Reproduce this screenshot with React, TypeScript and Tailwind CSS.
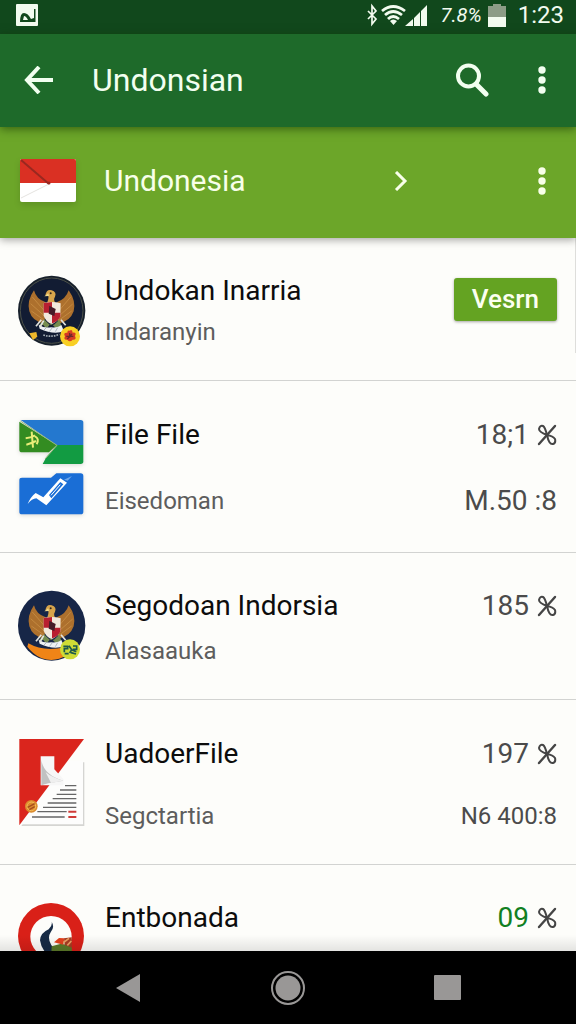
import type { ReactNode } from 'react';

type Row = {
  title: string;
  subtitle?: string;
  value?: string;
  detail?: string;
  action?: string;
  highlight?: boolean;
  icon: ReactNode;
  gap: string;
  pad: string;
  detailSize?: string;
};

const Emblem = ({ plain = false }: { plain?: boolean }) => (
  <svg viewBox="54 42 204 216" className="w-[68px] h-[72px]" aria-hidden="true">
    <ellipse cx="155" cy="149" rx="101" ry="105" fill={plain ? '#172647' : '#17202b'} />
    {!plain && <ellipse cx="155" cy="149" rx="94" ry="98" fill="#121c33" stroke="#4b5049" strokeWidth="3" />}
    {plain && <path d="M85 202Q130 228 194 214L200 238Q165 260 125 247Q98 234 82 212Z" fill="#ef8417" />}
    <path d="M137 124Q108 114 102 88Q80 119 88 151Q97 181 132 188L139 145Z" fill="#ad702d" />
    <path d="M170 124Q198 114 206 88Q229 120 221 151Q211 181 175 188L169 145Z" fill="#ad702d" />
    <path d="M97 108L132 148M92 128L132 164M94 150L132 177M212 108L178 148M218 129L178 164M215 150L178 177" stroke="#c48940" strokeWidth="3" />
    <path d="M136 103Q140 83 155 88Q171 93 165 107Q158 117 169 130H139Q147 114 145 105Z" fill="#d7a44b" />
    <path d="M145 97L133 106L147 105Z" fill="#f1dc8d" />
    <circle cx="152" cy="97" r="3" fill="#33281d" />
    <path d="M131 126Q156 119 182 127L181 166Q173 182 155 190Q136 180 131 164Z" fill="#f2e8dc" />
    <path d="M131 126L156 123V155H131ZM156 155H181V167Q172 182 156 187Z" fill="#b81f30" />
    <path d="M148 134L167 144L163 165L146 158Z" fill="#461b28" />
    <path d="M132 175L117 193L130 192L139 203L153 187L170 204L184 194L178 176L162 191H149Z" fill="#758c4f" />
    <path d="M116 191Q131 202 153 199Q175 201 184 192L192 211Q160 222 119 203Z" fill="#eef1f3" />
    <path d="M132 207L142 197M148 212L157 200M166 212L173 200" stroke="#8b98a6" strokeWidth="2" />
    <path d="M124 176L108 196M131 179L120 198M183 176L197 193" stroke="#e3e4df" strokeWidth="5" />
    {!plain && (
      <>
        <path d="M130 222Q154 230 178 220" stroke="#a7b0b7" strokeWidth="5" strokeDasharray="5 3" fill="none" />
        <path d="M88 217L109 213L112 227L99 237Z" fill="#efb72b" />
      </>
    )}
    <circle cx="210" cy={plain ? 220 : 226} r="30" fill={plain ? '#cfdc36' : '#f8cf24'} />
    {plain ? (
      <path d="M190 211H203V218H193V229M207 209L215 221L209 231M219 210H230V220H218M194 233H206M213 230L228 234M216 222L229 227" stroke="#1d594d" strokeWidth="5" fill="none" />
    ) : (
      <>
        <path d="M209 209Q217 203 218 215Q231 213 225 225Q231 237 218 236Q209 246 202 236Q189 238 195 226Q188 214 202 215Q202 207 209 209Z" fill="#d63a24" />
        <path d="M209 216V230M199 226H220M202 234L216 219" stroke="#6d2828" strokeWidth="4" />
      </>
    )}
  </svg>
);

const FolderPair = () => (
  <svg viewBox="54 54 204 294" className="w-[68px] h-[98px] drop-shadow-sm" aria-hidden="true">
    <path d="M62 57H242Q250 57 250 65V132H168Z" fill="#2478cf" />
    <path d="M170 132H250V181Q250 189 242 189H128L138 170Z" fill="#129b42" />
    <path d="M58 62L170 132L147 154H66Q58 154 58 146Z" fill="#338c21" />
    <path d="M61 60L171 133L135 174" stroke="#96b879" strokeWidth="3" fill="none" />
    <path d="M95 92L99 140M77 112Q91 111 105 103M105 106Q119 113 110 130M79 131Q91 128 108 120" stroke="#e9ed78" strokeWidth="6" fill="none" />
    <path d="M58 237Q58 230 66 230H153L169 217H242Q250 217 250 225V332Q250 340 242 340H66Q58 340 58 332Z" fill="#1a6ed6" />
    <path d="M83 309Q92 287 107 276L130 289L181 232L201 245L139 313L109 292Q96 293 83 309Z" fill="#fff" />
    <path d="M147 282L181 243L190 250L154 292Z" fill="#1a6ed6" />
    <path d="M153 283L181 251" stroke="#fff" strokeWidth="3" />
    <path d="M192 236L216 225L203 239Z" fill="#6ea7eb" />
  </svg>
);

const DocumentIcon = () => (
  <svg viewBox="54 42 204 270" className="w-[68px] h-[90px]" aria-hidden="true">
    <path d="M190 115H253V306H64Z" fill="#d5d5d2" />
    <path d="M171 112H249V301H59Z" fill="#fdfdfc" />
    <path d="M58 45H252L58 304Z" fill="#da251d" />
    <path d="M122 97H163V136L190 165V184H122Z" fill="#f7f7f7" />
    <path d="M124 108Q131 153 190 170L145 178L124 184Z" fill="#c1c1c1" />
    <path d="M137 145Q157 161 190 170L153 177Z" fill="#efefef" />
    <path d="M195 185H229M180 198H229M170 211H229M158 224H229M143 237H229M129 250H229M112 263H200M96 279H194" stroke="#666" strokeWidth="4" />
    <path d="M205 263H229M205 279H229" stroke="#cf3b37" strokeWidth="6" />
    <circle cx="94" cy="247" r="19" fill="#dc8b2d" />
    <circle cx="94" cy="247" r="13" fill="none" stroke="#f4bb58" strokeWidth="3" />
    <path d="M83 250L104 239M88 257L104 248" stroke="#a64c1d" strokeWidth="4" />
  </svg>
);

const RingIcon = () => (
  <svg viewBox="54 36 204 204" className="w-[68px] h-[68px]" aria-hidden="true">
    <circle cx="153" cy="138" r="99" fill="#d92018" />
    <circle cx="153" cy="140" r="62" fill="#fdfdfa" />
    <path d="M155 95Q165 112 152 127Q141 143 154 166L174 183L160 210Q124 183 120 151Q121 129 146 118Q158 108 155 95Z" fill="#172b45" />
    <path d="M155 169L183 161L215 167L216 192H154Z" fill="#5c7a29" />
    <path d="M162 157L177 144L193 145L190 164Z" fill="#e4411d" />
    <path d="M192 145L215 142L216 173L194 165Z" fill="#a83c23" />
    <path d="M190 158L207 145M202 166L214 153" stroke="#eba263" strokeWidth="5" />
  </svg>
);

const CrossIcon = () => (
  <svg viewBox="0 0 20 24" className="w-5 h-6" fill="none" stroke="#454545" strokeWidth="2" strokeLinecap="round" strokeLinejoin="round" aria-hidden="true">
    <path d="M2 21L18 3" strokeWidth="2.4" />
    <path d="M10 12Q2 9 2 6Q3 2 6 3Q8 4 10 12Q16 13 18 16Q19 20 16 21Q12 22 10 12" />
  </svg>
);

const DotsIcon = () => (
  <svg viewBox="0 0 8 28" className="w-2 h-7" fill="currentColor" aria-hidden="true">
    <circle cx="4" cy="4" r="3.7" />
    <circle cx="4" cy="14" r="3.7" />
    <circle cx="4" cy="24" r="3.7" />
  </svg>
);

const rows: Row[] = [
  { title: 'Undokan Inarria', subtitle: 'Indaranyin', action: 'Vesrn', icon: <Emblem />, gap: 'gap-[5px]', pad: 'pt-[33px] pb-8' },
  { title: 'File File', subtitle: 'Eisedoman', value: '18;1', detail: 'M.50 :8', icon: <FolderPair />, gap: 'gap-[30px]', pad: 'pt-[34px] pb-[35px]', detailSize: 'text-[28px]' },
  { title: 'Segodoan Indorsia', subtitle: 'Alasaauka', value: '185', icon: <Emblem plain />, gap: 'gap-[9px]', pad: 'pt-[33px] pb-8' },
  { title: 'UadoerFile', subtitle: 'Segctartia', value: '197', detail: 'N6 400:8', icon: <DocumentIcon />, gap: 'gap-[26px]', pad: 'pt-[34px] pb-8', detailSize: 'text-[24px]' },
  { title: 'Entbonada', value: '09', highlight: true, icon: <RingIcon />, gap: 'gap-0', pad: 'pt-[33px] pb-8' },
];

const StatusBar = () => (
  <div className="flex h-[34px] shrink-0 items-center bg-[#11481c] pl-4 pr-3 pb-1 text-[#f2fbef]">
    <svg viewBox="0 0 22 22" className="size-[22px]" aria-hidden="true">
      <rect width="22" height="22" rx="1" fill="#f2fbef" />
      <path d="M4 18Q4 9 8 9Q12 9 15 15L18 14V5H19.500V18ZM7 16H12Q10 12 8 12Z" fill="#11481c" fillRule="evenodd" />
    </svg>
    <svg viewBox="0 0 62 24" className="ml-auto h-6 w-[62px]" aria-hidden="true">
      <path d="M1 8L9 16L5 21V3L9 8L1 16" fill="none" stroke="currentColor" strokeWidth="1.7" />
      <g fill="none" stroke="currentColor" strokeWidth="2.8">
        <path d="M15 8Q26 -1 38 8" />
        <path d="M18 12Q26 5 35 12" />
        <path d="M21 16Q26 11 32 16" />
      </g>
      <path d="M23 18Q26 15 30 18L26.500 22Z" fill="currentColor" />
      <path d="M38 23L46 16V23ZM47 23V15L53 9V23ZM54 23V8L60 2V23Z" fill="currentColor" />
    </svg>
    <span className="ml-3 text-[20px] leading-6 italic">7.8%</span>
    <svg viewBox="0 0 18 23" className="ml-[6px] h-[23px] w-[18px]" aria-hidden="true">
      <path d="M5 0H13V2H18V13H0V2H5Z" fill="#8c9c86" />
      <path d="M0 13H18V23H0Z" fill="currentColor" />
    </svg>
    <span className="ml-3 text-[24px] leading-6">1:23</span>
  </div>
);

const ListRow = ({ row }: { row: Row }) => (
  <li className={`flex items-start gap-[19px] border-b border-[#d2d3d1] pl-[18px] pr-[19px] ${row.pad}`}>
    {/* the icon may be taller than the text, it must not stretch the row */}
    <div className="mt-1 h-16 w-[68px] shrink-0">{row.icon}</div>
    <div className={`flex min-w-0 flex-1 flex-col ${row.gap}`}>
      <h2 className="truncate text-[28px] leading-10 text-[#0c0c0c]">{row.title}</h2>
      {row.subtitle && <p className="truncate text-[24px] leading-8 text-[#5d5d5d]">{row.subtitle}</p>}
    </div>
    {row.action && (
      <button className="mt-[7px] h-[43px] rounded-[3px] bg-[#64a322] px-[18px] text-[26px] leading-[43px] font-medium text-[#fbfff0] shadow-[0_1px_3px_rgba(0,0,0,0.35)]">
        {row.action}
      </button>
    )}
    {row.value && (
      <div className={`flex flex-col items-end text-[#4b4b4b] ${row.gap}`}>
        <div className="flex items-center gap-2 text-[28px] leading-10">
          <span className={row.highlight ? 'text-[#118022]' : ''}>{row.value}</span>
          <CrossIcon />
        </div>
        {row.detail && <span className={`leading-8 ${row.detailSize}`}>{row.detail}</span>}
      </div>
    )}
  </li>
);

const App = () => {
  return (
    <div className="flex h-screen flex-col overflow-hidden bg-[#fdfdfa] font-[Roboto,sans-serif]">
      <StatusBar />

      <header className="relative z-20 flex h-[93px] shrink-0 items-center bg-[#1e6a2a] pl-4 pr-3 pb-px text-[#f2fff0] shadow-[0_2px_9px_rgba(20,50,0,0.6)]">
        <button aria-label="Back" className="flex size-[46px] items-center justify-center">
          <svg viewBox="0 0 30 28" className="h-7 w-[30px]" fill="none" stroke="currentColor" strokeWidth="4" aria-hidden="true">
            <path d="M15 1L3 14L15 27M3 14H29" />
          </svg>
        </button>
        <h1 className="ml-[30px] text-[32px] leading-10">Undonsian</h1>
        <button aria-label="Search" className="ml-auto flex size-11 items-center justify-center">
          <svg viewBox="0 0 34 34" className="size-[34px]" fill="none" stroke="currentColor" aria-hidden="true">
            <circle cx="13.500" cy="13" r="10.500" strokeWidth="4" />
            <path d="M21 21L31 31" strokeWidth="5" strokeLinecap="round" />
          </svg>
        </button>
        <button aria-label="More options" className="ml-[26px] flex size-11 items-center justify-center">
          <DotsIcon />
        </button>
      </header>

      <section className="relative z-10 flex h-[111px] shrink-0 items-center bg-[#6ca629] pl-5 pr-3 pb-[3px] text-[#f8ffe9] shadow-[0_2px_8px_rgba(0,0,0,0.35)]">
        <svg viewBox="0 0 56 43" className="mb-px h-[43px] w-14 drop-shadow-md" aria-hidden="true">
          <rect width="56" height="43" rx="2" fill="#fff" />
          <path d="M2 0H54Q56 0 56 2V24H0V2Q0 0 2 0Z" fill="#da3023" />
          <path d="M1 1L29 25" stroke="#992820" strokeWidth="2" />
          <path d="M29 25L1 39" stroke="#e5e3e0" strokeWidth="1" />
          <circle cx="29" cy="24" r="1.500" fill="#992820" />
        </svg>
        <h2 className="ml-7 text-[30px] leading-10">Undonesia</h2>
        <button aria-label="Open" className="ml-auto mr-[112px] flex h-11 w-[14px] items-center justify-center">
          <svg viewBox="0 0 14 20" className="h-5 w-[14px]" fill="none" stroke="currentColor" strokeWidth="3" aria-hidden="true">
            <path d="M2 1L11 10L2 19" />
          </svg>
        </button>
        <button aria-label="More" className="flex size-11 items-center justify-center">
          <DotsIcon />
        </button>
      </section>

      <main className="relative min-h-0 flex-1 overflow-hidden">
        <ul>
          {rows.map((row) => (
            <ListRow key={row.title} row={row} />
          ))}
        </ul>
        <div className="absolute top-0 right-0 h-[115px] w-px bg-[#dededb]" />
        <div className="absolute inset-x-0 bottom-0 h-4 bg-linear-to-b from-transparent to-black/10" />
      </main>

      <nav className="grid h-[73px] shrink-0 grid-cols-3 items-center bg-black px-12 text-[#999796]">
        <button aria-label="Back" className="flex justify-center">
          <svg viewBox="0 0 26 30" className="h-[30px] w-[26px]" fill="currentColor" aria-hidden="true">
            <path d="M1 15L25 1V29Z" />
          </svg>
        </button>
        <button aria-label="Home" className="flex justify-center">
          <svg viewBox="0 0 36 36" className="size-9" fill="currentColor" aria-hidden="true">
            <circle cx="18" cy="18" r="16" fill="none" stroke="currentColor" strokeWidth="2" />
            <circle cx="18" cy="18" r="12.500" />
          </svg>
        </button>
        <button aria-label="Recent apps" className="flex justify-center">
          <svg viewBox="0 0 28 26" className="h-[26px] w-7" fill="currentColor" aria-hidden="true">
            <rect width="27" height="25" rx="1" />
          </svg>
        </button>
      </nav>
    </div>
  );
};

export default App;
